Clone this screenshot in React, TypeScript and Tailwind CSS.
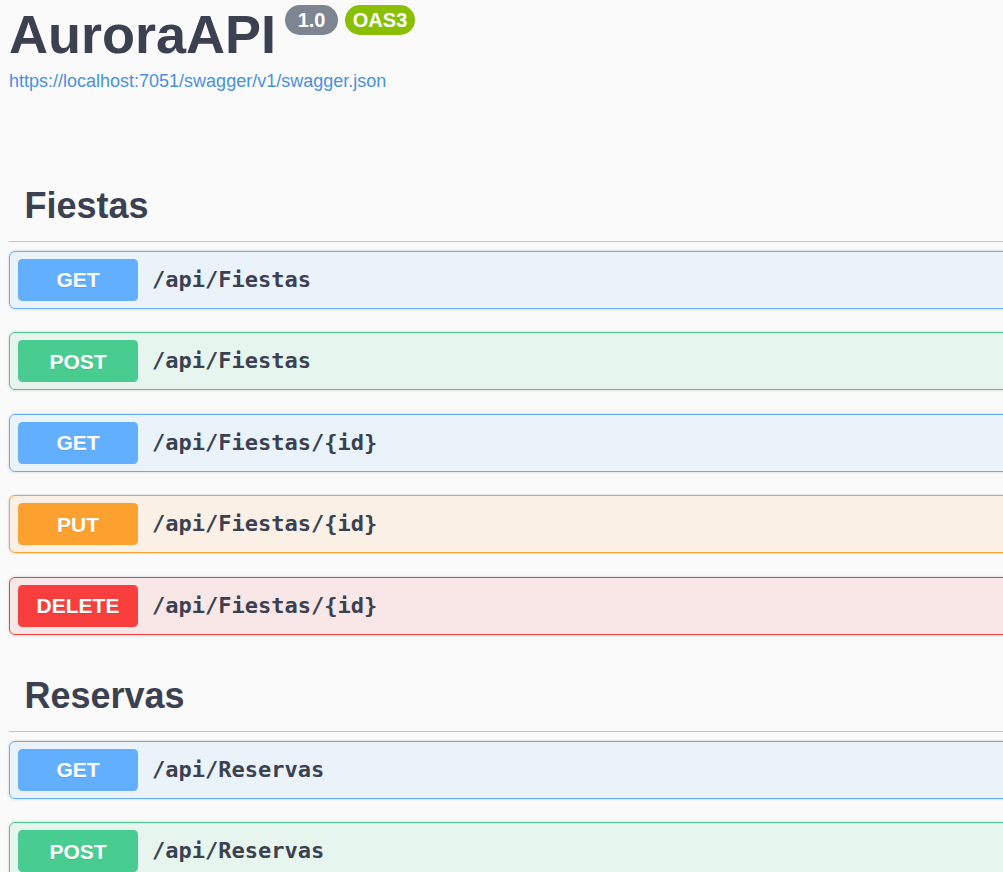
import React from "react";

type Op = { method: "GET" | "POST" | "PUT" | "DELETE"; path: string };

const styles: Record<Op["method"], { box: string; badge: string }> = {
  GET: { box: "bg-[rgba(97,175,254,0.1)] border-[#61affe]", badge: "bg-[#61affe]" },
  POST: { box: "bg-[rgba(73,204,144,0.1)] border-[#49cc90]", badge: "bg-[#49cc90]" },
  PUT: { box: "bg-[rgba(252,161,48,0.1)] border-[#fca130]", badge: "bg-[#fca130]" },
  DELETE: { box: "bg-[rgba(249,62,62,0.1)] border-[#f93e3e]", badge: "bg-[#f93e3e]" },
};

function OpBlock({ op }: { op: Op }) {
  const s = styles[op.method];
  return (
    <div
      className={`ml-[9px] mb-[23.5px] h-[58px] border rounded-[6px] px-[8px] flex items-center shadow-[0_0_3px_rgba(0,0,0,0.19)] ${s.box}`}
    >
      <div
        className={`w-[120px] h-[42px] rounded-[4.5px] ${s.badge} text-white font-bold text-[21px] leading-none flex items-center justify-center [text-shadow:0_1px_0_rgba(0,0,0,0.1)]`}
      >
        {op.method}
      </div>
      <span className="ml-[14px] font-['DejaVu_Sans_Mono',monospace] font-bold text-[22px] leading-none text-[#3b4151]">
        {op.path}
      </span>
    </div>
  );
}

function Section({ title, ops, className }: { title: string; ops: Op[]; className: string }) {
  return (
    <div className={`flex flex-col ${className}`}>
      <div className="ml-[9px] border-b border-[#c4c6cb] pb-[16.5px] pl-[15.5px]">
        <h3 className="text-[36px] font-bold leading-none text-[#3b4151]">{title}</h3>
      </div>
      <div className="mt-[9px] flex flex-col">
        {ops.map((op, i) => (
          <OpBlock key={i} op={op} />
        ))}
      </div>
    </div>
  );
}

export default function App() {
  return (
    <div className="w-[1003px] h-[872px] overflow-hidden bg-[#fafafa] font-['Liberation_Sans',Arial,sans-serif] text-[#3b4151]">
      <div className="w-[1100px] flex flex-col">
        <div className="pl-[9px]">
          <div className="flex items-start">
            <h1 className="mt-[7px] text-[54px] font-bold leading-none text-[#3b4151]">AuroraAPI</h1>
            <div className="ml-[9px] mt-[5px] flex gap-[7px]">
              <span className="w-[53px] h-[30px] rounded-full bg-[#7d8492] text-white font-bold text-[20px] leading-none flex items-center justify-center">
                1.0
              </span>
              <span className="w-[70px] h-[30px] rounded-full bg-[#89bf04] text-white font-bold text-[20px] leading-none flex items-center justify-center">
                OAS3
              </span>
            </div>
          </div>
          <a className="block mt-[11px] text-[18px] leading-none text-[#4990e2]" href="#">
            https://localhost:7051/swagger/v1/swagger.json
          </a>
        </div>

        <Section
          className="mt-[98px]"
          title="Fiestas"
          ops={[
            { method: "GET", path: "/api/Fiestas" },
            { method: "POST", path: "/api/Fiestas" },
            { method: "GET", path: "/api/Fiestas/{id}" },
            { method: "PUT", path: "/api/Fiestas/{id}" },
            { method: "DELETE", path: "/api/Fiestas/{id}" },
          ]}
        />
        <Section
          className="mt-[20px]"
          title="Reservas"
          ops={[
            { method: "GET", path: "/api/Reservas" },
            { method: "POST", path: "/api/Reservas" },
          ]}
        />
      </div>
    </div>
  );
}
